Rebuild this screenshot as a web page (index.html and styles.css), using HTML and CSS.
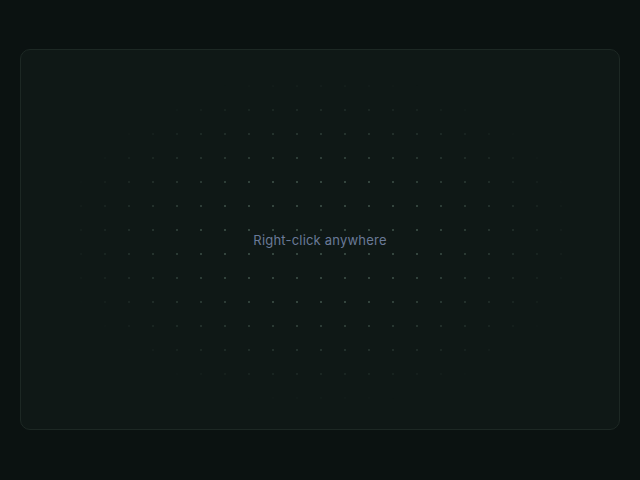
FILE: index.html
```html
<!DOCTYPE html>
<html>
<head>
<meta charset="utf-8">
<link rel="stylesheet" href="styles.css">
</head>
<body>
<div class="stage">
  <div class="canvas">
    <div class="dots"></div>
    <span class="hint">Right-click anywhere</span>
  </div>
</div>
</body>
</html>
```
FILE: styles.css
```css
html, body {
  margin: 0;
  padding: 0;
  height: 100%;
  background: #0b1211;
}
.stage {
  box-sizing: border-box;
  height: 480px;
  padding: 49px 20px 50px 20px;
  display: flex;
}
.canvas {
  position: relative;
  flex: 1;
  border: 1px solid #1d2824;
  border-radius: 10px;
  background: #0f1816;
  display: flex;
  align-items: center;
  justify-content: center;
  overflow: hidden;
}
.dots {
  position: absolute;
  inset: 0;
  background-image: radial-gradient(circle, #34453e 1px, transparent 1.3px);
  background-size: 24px 24px;
  background-position: 0 0;
  -webkit-mask-image: radial-gradient(ellipse at center, #000 25%, transparent 62%);
  mask-image: radial-gradient(ellipse at center, #000 25%, transparent 62%);
}
.hint {
  position: relative;
  font-family: Inter, "Noto Sans", sans-serif;
  font-size: 13px;
  color: #6a7a98;
  letter-spacing: 0.2px;
}
```
